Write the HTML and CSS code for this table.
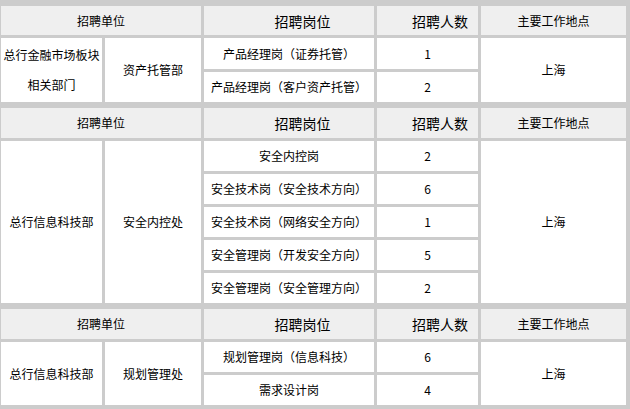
FILE: index.html
```html
<!DOCTYPE html>
<html lang="zh-CN">
<head>
<meta charset="utf-8">
<title>招聘岗位</title>
<link rel="stylesheet" href="styles.css">
</head>
<body>
<div class="page">
  <table class="jobs">
    <colgroup><col class="c1"><col class="c2"><col class="c3"><col class="c4"><col class="c5"></colgroup>
    <tr class="head h29">
      <th colspan="2">招聘单位</th>
      <th class="big shift">招聘岗位</th>
      <th class="big shift2">招聘人数</th>
      <th>主要工作地点</th>
    </tr>
    <tr class="r31">
      <td rowspan="2" class="tall">总行金融市场板块相关部门</td>
      <td rowspan="2">资产托管部</td>
      <td>产品经理岗（证券托管）</td>
      <td>1</td>
      <td rowspan="2">上海</td>
    </tr>
    <tr>
      <td>产品经理岗（客户资产托管）</td>
      <td>2</td>
    </tr>
  </table>

  <table class="jobs">
    <colgroup><col class="c1"><col class="c2"><col class="c3"><col class="c4"><col class="c5"></colgroup>
    <tr class="head">
      <th colspan="2">招聘单位</th>
      <th class="big shift">招聘岗位</th>
      <th class="big shift2">招聘人数</th>
      <th>主要工作地点</th>
    </tr>
    <tr>
      <td rowspan="5">总行信息科技部</td>
      <td rowspan="5">安全内控处</td>
      <td>安全内控岗</td>
      <td>2</td>
      <td rowspan="5">上海</td>
    </tr>
    <tr><td>安全技术岗（安全技术方向）</td><td>6</td></tr>
    <tr><td>安全技术岗（网络安全方向）</td><td>1</td></tr>
    <tr><td>安全管理岗（开发安全方向）</td><td>5</td></tr>
    <tr><td>安全管理岗（安全管理方向）</td><td>2</td></tr>
  </table>

  <table class="jobs">
    <colgroup><col class="c1"><col class="c2"><col class="c3"><col class="c4"><col class="c5"></colgroup>
    <tr class="head">
      <th colspan="2">招聘单位</th>
      <th class="big shift">招聘岗位</th>
      <th class="big shift2">招聘人数</th>
      <th>主要工作地点</th>
    </tr>
    <tr>
      <td rowspan="2">总行信息科技部</td>
      <td rowspan="2">规划管理处</td>
      <td>规划管理岗（信息科技）</td>
      <td>6</td>
      <td rowspan="2">上海</td>
    </tr>
    <tr><td>需求设计岗</td><td>4</td></tr>
  </table>
</div>
</body>
</html>
```

FILE: styles.css
```css
html, body {
  margin: 0;
  padding: 0;
  background: #cccccc;
}

body {
  font-family: "Noto Sans CJK SC", "Noto Sans", sans-serif;
  font-size: 12px;
  color: #000;
  overflow: hidden;
}

.page {
  padding-top: 3px;
  margin-left: -2px;
  width: 631px;
}

.jobs {
  width: 631px;
  table-layout: fixed;
  border-collapse: separate;
  border-spacing: 3px;
  background: #cccccc;
}

.c1 { width: 101px; }
.c2 { width: 96px; }
.c3 { width: 170px; }
.c4 { width: 101px; }
.c5 { width: 145px; }

.jobs th,
.jobs td {
  padding: 0;
  height: 30px;
  text-align: center;
  vertical-align: middle;
  background: #ffffff;
  font-weight: normal;
  line-height: 16px;
  white-space: normal;
}

.jobs .head th {
  background: #efefef;
}

.jobs .h29 th {
  height: 29px;
}

.jobs .r31 td {
  height: 31px;
}

.jobs th.big {
  font-size: 14px;
}

.jobs th.shift {
  padding-left: 27px;
}

.jobs th.shift2 {
  padding-left: 25px;
}

.jobs td.tall {
  line-height: 30px;
}
```
